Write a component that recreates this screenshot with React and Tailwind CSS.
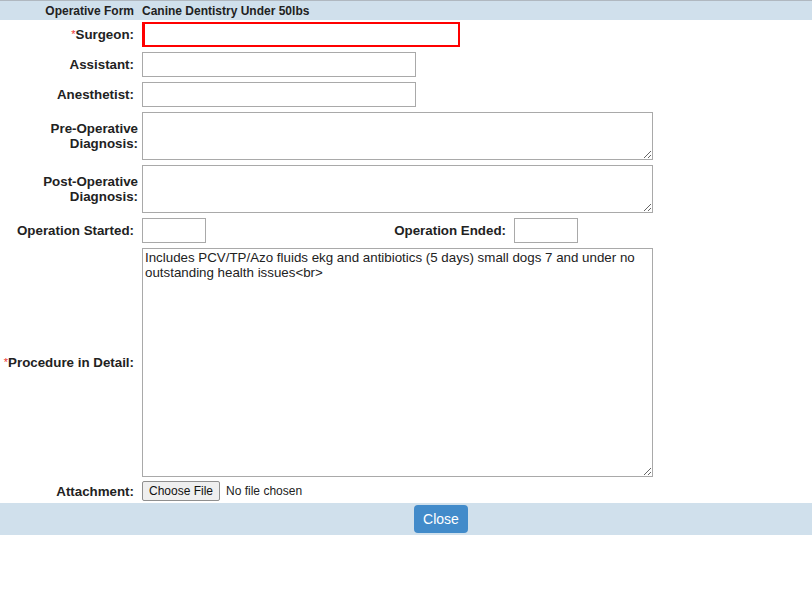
import { useState } from 'react';

const font = { fontFamily: '"Liberation Sans", Arial, sans-serif' };

const Label = ({ children, required, wrap, className = '' }) => (
  <div className={`text-right font-bold text-[13.33px] leading-[15px] text-[#222] ${wrap ? 'pr-[4px]' : 'pr-[8px]'} ${className}`}>
    {required && <span className="text-[#e33] font-normal align-top text-[11px]">*</span>}
    {children}
  </div>
);

const inputCls = 'h-[25px] border border-[#a9a9a9] bg-white outline-none px-[3px] text-[13.33px]';
const areaCls = 'border border-[#a9a9a9] bg-white outline-none px-[2px] py-[1px] text-[13.33px] leading-[15px] text-[#222]';

const App = () => {
  const [procedure, setProcedure] = useState(
    'Includes PCV/TP/Azo fluids ekg and antibiotics (5 days) small dogs 7 and under no outstanding health issues<br>'
  );

  return (
    <div className="w-[812px] h-[603px] bg-white" style={font}>
      {/* Title bar */}
      <div className="flex items-center h-[20px] bg-[#d0e0ec] border-t border-[#b0b8c0] text-[12px] font-bold text-[#222]">
        <div className="w-[142px] text-right pr-[8px]">Operative Form</div>
        <div>Canine Dentistry Under 50lbs</div>
      </div>

      {/* Form rows */}
      <div className="grid grid-cols-[142px_1fr] items-center gap-y-[5px] pt-[2px]">
        <Label required>Surgeon:</Label>
        <div className="flex">
          <input className={`${inputCls} w-[318px] border-2 border-[#f00] border-l-[3px]`} />
        </div>

        <Label>Assistant:</Label>
        <div className="flex">
          <input className={`${inputCls} w-[274px]`} />
        </div>

        <Label>Anesthetist:</Label>
        <div className="flex">
          <input className={`${inputCls} w-[274px]`} />
        </div>

        <Label wrap>Pre-Operative Diagnosis:</Label>
        <div className="flex">
          <textarea className={`${areaCls} w-[511px] h-[48px]`} />
        </div>

        <Label wrap>Post-Operative Diagnosis:</Label>
        <div className="flex">
          <textarea className={`${areaCls} w-[511px] h-[48px]`} />
        </div>

        <Label>Operation Started:</Label>
        <div className="flex items-center">
          <input className={`${inputCls} w-[64px]`} />
          <div className="w-[308px] text-right pr-[8px] font-bold text-[13.33px] text-[#222]">Operation Ended:</div>
          <input className={`${inputCls} w-[64px]`} />
        </div>

        <Label required>Procedure in Detail:</Label>
        <div className="flex">
          <textarea
            className={`${areaCls} w-[511px] h-[229px]`}
            value={procedure}
            onChange={(e) => setProcedure(e.target.value)}
          />
        </div>

        <Label className="-mt-[1px]">Attachment:</Label>
        <div className="flex items-center h-[20px] -mt-[1px] text-[12px] text-[#222]">
          <div className="h-[20px] px-[6px] flex items-center border border-[#8f8f8f] rounded-[2px] bg-[#efefef] text-[#111]">
            Choose File
          </div>
          <span className="ml-[6px]">No file chosen</span>
        </div>
      </div>

      {/* Footer */}
      <div className="mt-[2px] h-[32px] bg-[#d0e0ec] flex items-center justify-center">
        <button className="ml-[70px] h-[28px] w-[54px] rounded-[4px] bg-[#428bca] text-white text-[14px]">
          Close
        </button>
      </div>
    </div>
  );
};

export default App;
